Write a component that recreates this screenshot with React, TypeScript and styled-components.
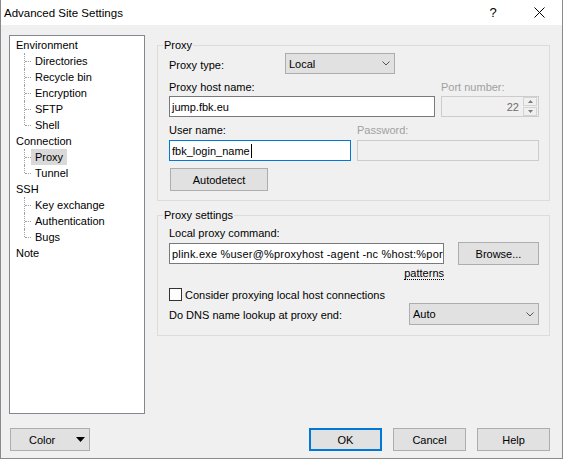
import React from "react";
import styled, { createGlobalStyle, css } from "styled-components";

const Global = createGlobalStyle`
  html, body { margin: 0; padding: 0; background: #ffffff; }
  body {
    font-family: "Liberation Sans", Arial, sans-serif;
    font-size: 11px;
    color: #000;
  }
  * { box-sizing: border-box; }
`;

const Window = styled.div`
  width: 563px;
  height: 459px;
  display: flex;
  flex-direction: column;
  border: 1px solid #8a8a8a;
  border-top: none;
  background: #f0f0f0;
`;

const TitleBar = styled.div`
  height: 25px;
  flex: none;
  background: #ffffff;
  display: flex;
  align-items: center;
  padding-left: 3px;
`;

const TitleText = styled.span`
  font-size: 11.5px;
  line-height: 16px;
  flex: 1;
`;

const TitleButton = styled.div`
  width: 46px;
  height: 25px;
  display: flex;
  align-items: center;
  justify-content: center;
  font-size: 13px;
  color: #000;
`;

const Body = styled.div`
  flex: 1;
  display: flex;
  flex-direction: column;
  padding: 10px 12px 7px 8px;
`;

const Main = styled.div`
  display: flex;
  gap: 12px;
  height: 379px;
`;

const Tree = styled.div`
  width: 136px;
  height: 379px;
  flex: none;
  border: 1px solid #828790;
  background: #ffffff;
  padding-top: 1px;
`;

const TreeRoot = styled.div`
  height: 16px;
  line-height: 16px;
  padding-left: 2px;
  white-space: nowrap;
`;

const TreeChild = styled.div<{ $last?: boolean }>`
  position: relative;
  height: 16px;
  line-height: 16px;
  padding-left: 21px;
  white-space: nowrap;
  &::before {
    content: "";
    position: absolute;
    left: 14px;
    top: 0;
    height: ${(p) => (p.$last ? "8px" : "16px")};
    border-left: 1px dotted #a0a0a0;
  }
  &::after {
    content: "";
    position: absolute;
    left: 15px;
    top: 8px;
    width: 6px;
    border-top: 1px dotted #a0a0a0;
  }
`;

const NodeLabel = styled.span<{ $selected?: boolean }>`
  display: inline-block;
  height: 16px;
  padding: 0 4px;
  background: ${(p) => (p.$selected ? "#d9d9d9" : "transparent")};
`;

const RightPanel = styled.div`
  flex: 1;
  display: flex;
  flex-direction: column;
  padding-top: 10px;
  gap: 14px;
`;

const Group = styled.div<{ $pad: string }>`
  position: relative;
  border: 1px solid #dcdcdc;
  padding: ${(p) => p.$pad};
  display: flex;
  flex-direction: column;
`;

const Legend = styled.span`
  position: absolute;
  top: -9px;
  left: 5px;
  padding: 0 1px;
  line-height: 16px;
  background: #f0f0f0;
`;

const Row = styled.div<{ $h: number; $mt?: number; $gap?: number; $between?: boolean }>`
  display: flex;
  align-items: center;
  height: ${(p) => p.$h}px;
  margin-top: ${(p) => p.$mt ?? 0}px;
  gap: ${(p) => p.$gap ?? 0}px;
  justify-content: ${(p) => (p.$between ? "space-between" : "flex-start")};
`;

const FieldLabel = styled.span<{ $disabled?: boolean; $w?: number; $dy?: number }>`
  color: ${(p) => (p.$disabled ? "#a0a0a0" : "#000")};
  line-height: 16px;
  white-space: nowrap;
  padding-top: ${(p) => p.$dy ?? 0}px;
  ${(p) =>
    p.$w &&
    css`
      width: ${p.$w}px;
      flex: none;
    `}
`;

const TextBox = styled.div<{ $w: number; $focused?: boolean; $disabled?: boolean; $spacing?: number }>`
  width: ${(p) => p.$w}px;
  height: 21px;
  flex: none;
  display: flex;
  align-items: center;
  padding: 0 2px;
  overflow: hidden;
  white-space: nowrap;
  letter-spacing: ${(p) => p.$spacing ?? 0}px;
  background: ${(p) => (p.$disabled ? "#f0f0f0" : "#ffffff")};
  border: 1px solid
    ${(p) => (p.$focused ? "#0078d7" : p.$disabled ? "#cccccc" : "#7a7a7a")};
`;

const Caret = styled.span`
  display: inline-block;
  width: 1px;
  height: 14px;
  background: #000;
  margin-left: 1px;
`;

const Combo = styled.div<{ $w: number; $h: number }>`
  width: ${(p) => p.$w}px;
  height: ${(p) => p.$h}px;
  flex: none;
  display: flex;
  align-items: center;
  justify-content: space-between;
  padding: 0 4px 0 3px;
  background: #e1e1e1;
  border: 1px solid #adadad;
`;

const PortBox = styled.div`
  width: 98px;
  height: 21px;
  flex: none;
  display: flex;
  align-items: center;
  justify-content: flex-end;
  padding: 0 1px 0 2px;
  background: #f0f0f0;
  border: 1px solid #cccccc;
  color: #6d6d6d;
`;

const PortValue = styled.span`
  margin-right: 4px;
`;

const SpinCol = styled.div`
  width: 14px;
  height: 19px;
  display: flex;
  flex-direction: column;
  gap: 1px;
`;

const SpinBtn = styled.div`
  flex: 1;
  display: flex;
  align-items: center;
  justify-content: center;
  border: 1px solid #d4d4d4;
  background: #f0f0f0;
`;

const Button = styled.div<{ $w: number; $default?: boolean }>`
  width: ${(p) => p.$w}px;
  height: 23px;
  flex: none;
  display: flex;
  align-items: center;
  justify-content: center;
  background: #e1e1e1;
  border: ${(p) => (p.$default ? "2px solid #0078d7" : "1px solid #adadad")};
  white-space: nowrap;
`;

const SplitButton = styled.div`
  width: 80px;
  height: 23px;
  flex: none;
  display: flex;
  align-items: center;
  padding: 0 4px 0 18px;
  background: #e1e1e1;
  border: 1px solid #adadad;
  margin-left: 1px;
`;

const SplitArrow = styled.svg`
  margin-left: auto;
`;

const AutoButtonWrap = styled.div`
  margin-top: 7px;
  padding-left: 1px;
`;

const PatternsLine = styled.div`
  width: 275px;
  height: 14px;
  line-height: 14px;
  margin-top: 1px;
  text-align: right;
`;

const Patterns = styled.span`
  border-bottom: 1px dotted #000;
`;

const CheckBox = styled.span`
  width: 13px;
  height: 13px;
  flex: none;
  border: 1px solid #333333;
  background: #ffffff;
  margin-right: 3px;
`;

const Footer = styled.div`
  margin-top: 14px;
  height: 23px;
  display: flex;
  align-items: center;
`;

const FooterButtons = styled.div`
  margin-left: auto;
  display: flex;
  gap: 11px;
`;

const Chevron = () => (
  <svg width="8" height="5" viewBox="0 0 8 5">
    <polyline points="0.5,0.5 4,4 7.5,0.5" fill="none" stroke="#555" strokeWidth="1" />
  </svg>
);

const children = (items: string[], selected?: string) =>
  items.map((t, i) => (
    <TreeChild key={t} $last={i === items.length - 1}>
      <NodeLabel $selected={t === selected}>{t}</NodeLabel>
    </TreeChild>
  ));

export default function App() {
  return (
    <>
      <Global />
      <Window>
        <TitleBar>
          <TitleText>Advanced Site Settings</TitleText>
          <TitleButton>?</TitleButton>
          <TitleButton>
            <svg width="11" height="11" viewBox="0 0 11 11">
              <path d="M0.5 0.5 L10.5 10.5 M10.5 0.5 L0.5 10.5" stroke="#000" strokeWidth="1" />
            </svg>
          </TitleButton>
        </TitleBar>
        <Body>
          <Main>
            <Tree>
              <TreeRoot>
                <NodeLabel>Environment</NodeLabel>
              </TreeRoot>
              {children(["Directories", "Recycle bin", "Encryption", "SFTP", "Shell"])}
              <TreeRoot>
                <NodeLabel>Connection</NodeLabel>
              </TreeRoot>
              {children(["Proxy", "Tunnel"], "Proxy")}
              <TreeRoot>
                <NodeLabel>SSH</NodeLabel>
              </TreeRoot>
              {children(["Key exchange", "Authentication", "Bugs"])}
              <TreeRoot>
                <NodeLabel>Note</NodeLabel>
              </TreeRoot>
            </Tree>
            <RightPanel>
              <Group $pad="7px 10px 9px 11px">
                <Legend>Proxy</Legend>
                <Row $h={21}>
                  <FieldLabel $w={116} $dy={3}>
                    Proxy type:
                  </FieldLabel>
                  <Combo $w={110} $h={21}>
                    <span>Local</span>
                    <Chevron />
                  </Combo>
                </Row>
                <Row $h={16} $mt={5}>
                  <FieldLabel $w={272}>Proxy host name:</FieldLabel>
                  <FieldLabel $disabled>Port number:</FieldLabel>
                </Row>
                <Row $h={21} $mt={1} $gap={6}>
                  <TextBox $w={266}>jump.fbk.eu</TextBox>
                  <PortBox>
                    <PortValue>22</PortValue>
                    <SpinCol>
                      <SpinBtn>
                        <svg width="5" height="3" viewBox="0 0 5 3">
                          <polygon points="0,3 5,3 2.5,0" fill="#7a7a7a" />
                        </svg>
                      </SpinBtn>
                      <SpinBtn>
                        <svg width="5" height="3" viewBox="0 0 5 3">
                          <polygon points="0,0 5,0 2.5,3" fill="#7a7a7a" />
                        </svg>
                      </SpinBtn>
                    </SpinCol>
                  </PortBox>
                </Row>
                <Row $h={16} $mt={5}>
                  <FieldLabel $w={188}>User name:</FieldLabel>
                  <FieldLabel $disabled>Password:</FieldLabel>
                </Row>
                <Row $h={21} $mt={2} $gap={6}>
                  <TextBox $w={182} $focused>
                    fbk_login_name
                    <Caret />
                  </TextBox>
                  <TextBox $w={182} $disabled />
                </Row>
                <AutoButtonWrap>
                  <Button $w={98}>Autodetect</Button>
                </AutoButtonWrap>
              </Group>
              <Group $pad="9px 10px 10px 11px">
                <Legend>Proxy settings</Legend>
                <Row $h={16}>
                  <FieldLabel>Local proxy command:</FieldLabel>
                </Row>
                <Row $h={23} $mt={1} $gap={14}>
                  <TextBox $w={275} $spacing={0.2}>
                    plink.exe %user@%proxyhost -agent -nc %host:%port
                  </TextBox>
                  <Button $w={81}>Browse...</Button>
                </Row>
                <PatternsLine>
                  <Patterns>patterns</Patterns>
                </PatternsLine>
                <Row $h={13} $mt={8}>
                  <CheckBox />
                  <FieldLabel>Consider proxying local host connections</FieldLabel>
                </Row>
                <Row $h={22} $mt={2} $between>
                  <FieldLabel $dy={2}>Do DNS name lookup at proxy end:</FieldLabel>
                  <Combo $w={130} $h={22}>
                    <span>Auto</span>
                    <Chevron />
                  </Combo>
                </Row>
              </Group>
            </RightPanel>
          </Main>
          <Footer>
            <SplitButton>
              <span>Color</span>
              <SplitArrow width="9" height="5" viewBox="0 0 9 5">
                <polygon points="0,0 9,0 4.5,5" fill="#000" />
              </SplitArrow>
            </SplitButton>
            <FooterButtons>
              <Button $w={73} $default>
                OK
              </Button>
              <Button $w={73}>Cancel</Button>
              <Button $w={73}>Help</Button>
            </FooterButtons>
          </Footer>
        </Body>
      </Window>
    </>
  );
}
